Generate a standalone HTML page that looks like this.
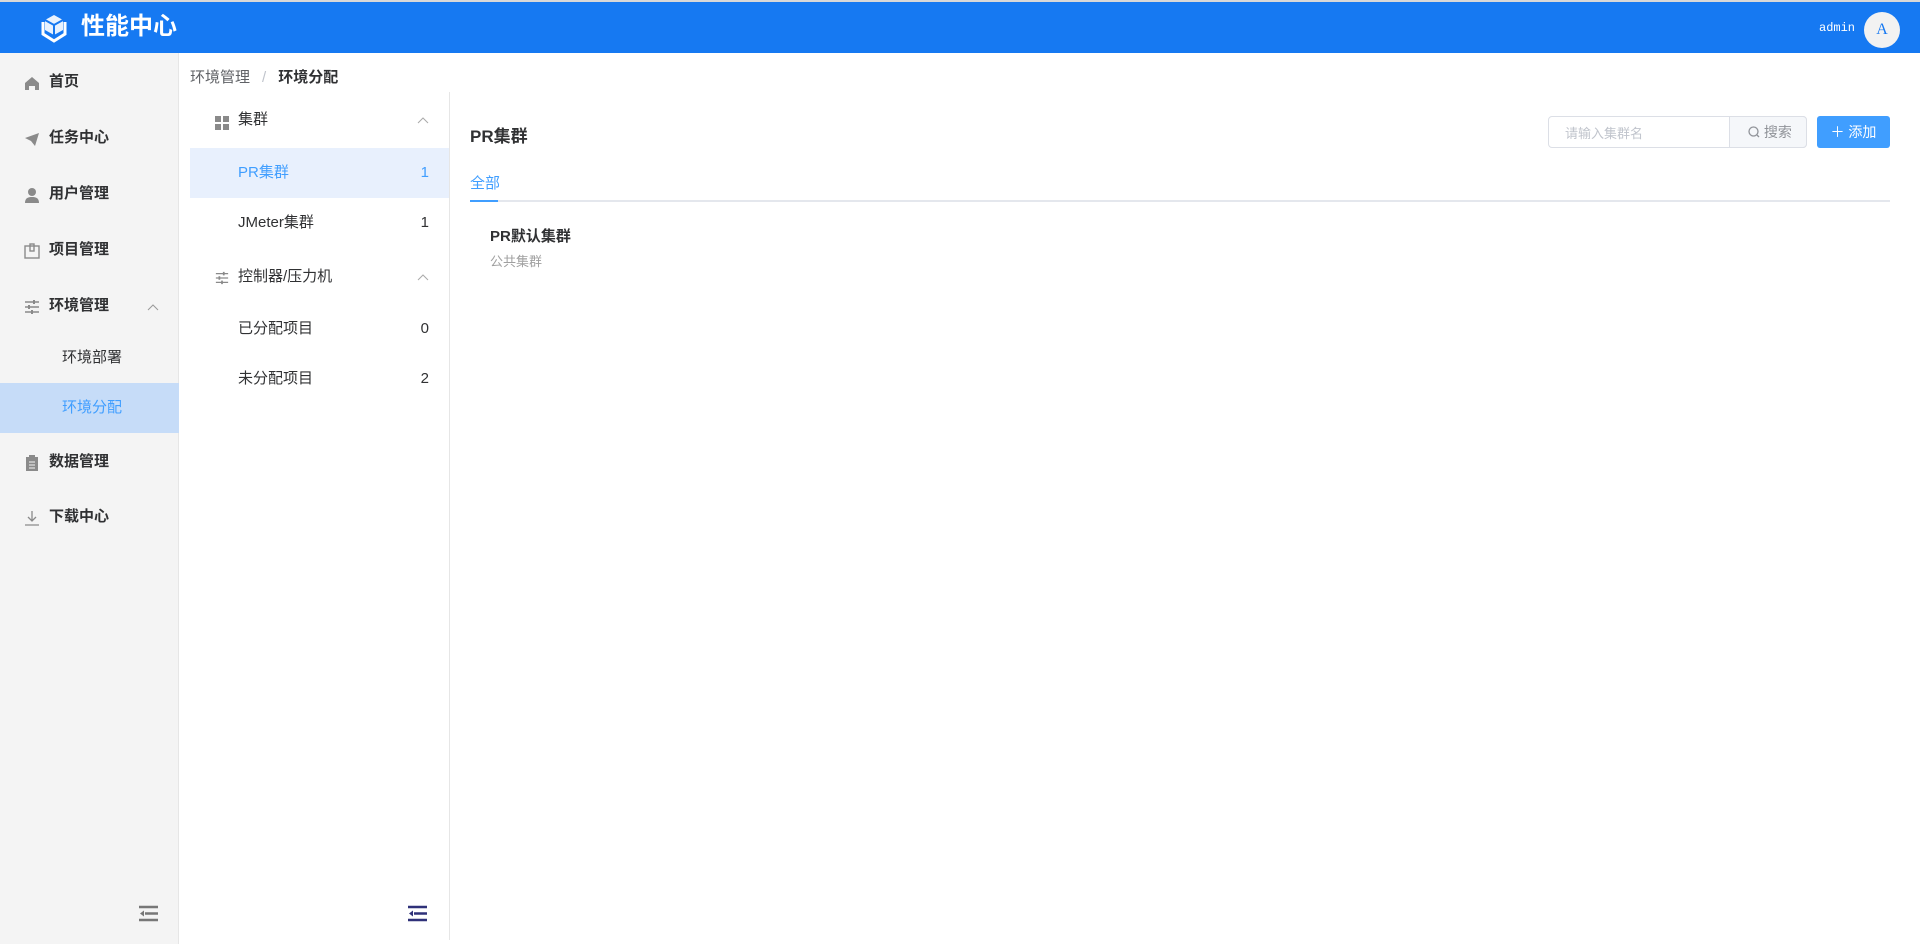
<!DOCTYPE html><html><head><meta charset="utf-8"><style>
*{box-sizing:border-box;margin:0;padding:0}
body{width:1920px;height:944px;overflow:hidden;background:#fff;font-family:"Liberation Sans","Noto Sans CJK SC",sans-serif;color:#303133;font-size:14px;position:relative}
.top{position:absolute;left:0;top:2px;width:1920px;height:51px;background:#1679f2;border-top:0}
.topline{position:absolute;left:0;top:0;width:1920px;height:2px;background:#d8d8d8}
.abs{position:absolute;white-space:nowrap}
.side{position:absolute;left:0;top:53px;width:179px;height:891px;background:#f4f4f4;border-right:1px solid #e6e6e6}
.si{position:absolute;left:0;width:179px;height:50px;line-height:50px;font-size:15px;font-weight:bold;color:#303133}
.si svg{position:absolute;left:24px;top:18px}
.si span{position:absolute;left:49px}
.sub{position:absolute;left:0;width:179px;height:50px;line-height:50px;font-size:15px;color:#303133}
.p2{position:absolute;left:190px;top:92px;width:260px;height:848px;border-right:1px solid #e6e6e6}
.r{position:absolute;left:0;width:259px;height:50px;line-height:50px;font-size:15px}
.r .t{position:absolute;left:48px}.r .n{position:absolute;right:20px}
</style></head><body>
<div class="topline"></div>
<div class="top">
<svg class="abs" style="left:39px;top:10px" width="30" height="32" viewBox="0 0 30 32"><path d="M15 3l9 5v10l-9 5-9-5V8z" fill="#fff" opacity=".9"/><path d="M15 13l9-5M15 13L6 8M15 13v10" stroke="#1679f2" stroke-width="2" fill="none"/><path d="M4 10v12l11 7 11-7V10" stroke="#fff" stroke-width="3" fill="none"/></svg>
<div class="abs" style="left:81px;top:10px;font-size:24px;font-weight:bold;color:#fff;line-height:30px">性能中心</div>
<div class="abs" style="left:1819px;top:19px;font-size:12px;color:#fff;font-family:'Liberation Mono',monospace">admin</div>
<div class="abs" style="left:1864px;top:10px;width:36px;height:36px;border-radius:50%;background:#f2f2f2;color:#1679f2;text-align:center;line-height:36px;font-size:16px;font-family:'Liberation Serif',serif">A</div>
</div>
<div class="side">
<div class="si" style="top:4px"><svg width="16" height="16" viewBox="0 0 16 16"><path d="M1 8L8 2l7 6v7h-4v-4H5v4H1z" fill="#8a8a8a"/></svg><span>首页</span></div>
<div class="si" style="top:60px"><svg width="16" height="16" viewBox="0 0 16 16"><path d="M1 7L15 2 11 15 7 10z" fill="#8a8a8a"/></svg><span>任务中心</span></div>
<div class="si" style="top:116px"><svg width="16" height="16" viewBox="0 0 16 16"><circle cx="8" cy="5" r="4" fill="#8a8a8a"/><path d="M1 16c0-5 3-6 7-6s7 1 7 6z" fill="#8a8a8a"/></svg><span>用户管理</span></div>
<div class="si" style="top:172px"><svg width="16" height="16" viewBox="0 0 16 16"><rect x="1" y="3" width="14" height="12" fill="none" stroke="#8a8a8a" stroke-width="1.4"/><rect x="6" y="1" width="4" height="7" fill="none" stroke="#8a8a8a" stroke-width="1.4"/></svg><span>项目管理</span></div>
<div class="si" style="top:228px"><svg width="16" height="16" viewBox="0 0 16 16"><path d="M1 3h14M1 8h14M1 13h14" stroke="#8a8a8a" stroke-width="1.4"/><rect x="9" y="1" width="2" height="4" fill="#8a8a8a"/><rect x="4" y="6" width="2" height="4" fill="#8a8a8a"/><rect x="7" y="11" width="2" height="4" fill="#8a8a8a"/></svg><span>环境管理</span><svg style="left:147px;top:22px" width="12" height="8" viewBox="0 0 12 8"><path d="M1 7l5-5 5 5" stroke="#999" fill="none"/></svg></div>
<div class="sub" style="top:280px"><span style="position:absolute;left:62px">环境部署</span></div>
<div class="sub" style="top:330px;background:#c6dcf8;color:#409eff"><span style="position:absolute;left:62px">环境分配</span></div>
<div class="si" style="top:384px"><svg width="16" height="16" viewBox="0 0 16 16"><rect x="2" y="2" width="12" height="14" fill="#8a8a8a"/><rect x="5" y="0" width="6" height="3" fill="#8a8a8a"/><path d="M5 7h6M5 10h6M5 13h6" stroke="#f4f4f4"/></svg><span>数据管理</span></div>
<div class="si" style="top:439px"><svg width="16" height="16" viewBox="0 0 16 16"><path d="M8 1v10M4 7l4 4 4-4M1 15h14" stroke="#8a8a8a" stroke-width="1.3" fill="none"/></svg><span>下载中心</span></div>
<svg class="abs" style="left:139px;top:852px" width="19" height="17" viewBox="0 0 19 17"><path d="M0 2h19M6 8.5h13M0 15h19" stroke="#777" stroke-width="2.5"/><path d="M1 8.5l4-3v6z" fill="#777"/></svg>
</div>
<div class="abs" style="left:190px;top:66px;font-size:15px;color:#606266">环境管理<span style="color:#c0c4cc;margin:0 12px">/</span><b style="color:#303133">环境分配</b></div>
<div class="p2">
<div class="r" style="top:3px"><svg style="position:absolute;left:25px;top:21px" width="14" height="14" viewBox="0 0 14 14"><rect width="6" height="6" fill="#8a8a8a"/><rect x="8" width="6" height="6" fill="#8a8a8a"/><rect y="8" width="6" height="6" fill="#8a8a8a"/><rect x="8" y="8" width="6" height="6" fill="#8a8a8a"/></svg><span style="position:absolute;left:48px">集群</span><svg style="position:absolute;left:227px;top:21px" width="12" height="8" viewBox="0 0 12 8"><path d="M1 7l5-5 5 5" stroke="#aaa" fill="none"/></svg></div>
<div class="r" style="top:56px;background:#e8f0fd;color:#409eff"><span class="t">PR集群</span><span class="n">1</span></div>
<div class="r" style="top:106px"><span class="t">JMeter集群</span><span class="n">1</span></div>
<div class="r" style="top:160px"><svg style="position:absolute;left:25px;top:19px" width="14" height="14" viewBox="0 0 16 16"><path d="M1 3h14M1 8h14M1 13h14" stroke="#8a8a8a" stroke-width="1.4"/><rect x="9" y="1" width="2" height="4" fill="#8a8a8a"/><rect x="4" y="6" width="2" height="4" fill="#8a8a8a"/><rect x="7" y="11" width="2" height="4" fill="#8a8a8a"/></svg><span style="position:absolute;left:48px">控制器/压力机</span><svg style="position:absolute;left:227px;top:21px" width="12" height="8" viewBox="0 0 12 8"><path d="M1 7l5-5 5 5" stroke="#aaa" fill="none"/></svg></div>
<div class="r" style="top:212px"><span class="t">已分配项目</span><span class="n">0</span></div>
<div class="r" style="top:262px"><span class="t">未分配项目</span><span class="n">2</span></div>
<svg class="abs" style="left:218px;top:813px" width="19" height="17" viewBox="0 0 19 17"><path d="M0 2h19M6 8.5h13M0 15h19" stroke="#2f3179" stroke-width="2.5"/><path d="M1 8.5l4-3v6z" fill="#2f3179"/></svg>
</div>
<div class="abs" style="left:470px;top:122px;font-size:17px;font-weight:bold">PR集群</div>
<div class="abs" style="left:1548px;top:116px;width:259px;height:32px;border:1px solid #dcdfe6;border-radius:4px"></div>
<div class="abs" style="left:1565px;top:123px;font-size:13px;color:#c0c4cc">请输入集群名</div>
<div class="abs" style="left:1729px;top:116px;width:78px;height:32px;border:1px solid #dcdfe6;border-radius:0 4px 4px 0;background:#f5f7fa;color:#909399;font-size:14px;line-height:30px;padding-left:18px"><svg width="12" height="12" viewBox="0 0 12 12" style="vertical-align:-1px"><circle cx="5.5" cy="5.5" r="4.5" stroke="#909399" stroke-width="1.3" fill="none"/><path d="M9 9l2 2" stroke="#909399" stroke-width="1.3"/></svg> 搜索</div>
<div class="abs" style="left:1817px;top:116px;width:73px;height:32px;border-radius:3px;background:#409eff;color:#fff;font-size:14px;line-height:32px;text-align:center">＋ 添加</div>
<div class="abs" style="left:470px;top:172px;font-size:15px;color:#409eff">全部</div>
<div class="abs" style="left:470px;top:200px;width:1420px;height:2px;background:#e4e7ed"></div>
<div class="abs" style="left:470px;top:200px;width:28px;height:2px;background:#409eff"></div>
<div class="abs" style="left:490px;top:225px;font-size:15px;font-weight:bold">PR默认集群</div>
<div class="abs" style="left:490px;top:251px;font-size:13px;color:#a0a0a0">公共集群</div>
</body></html>
